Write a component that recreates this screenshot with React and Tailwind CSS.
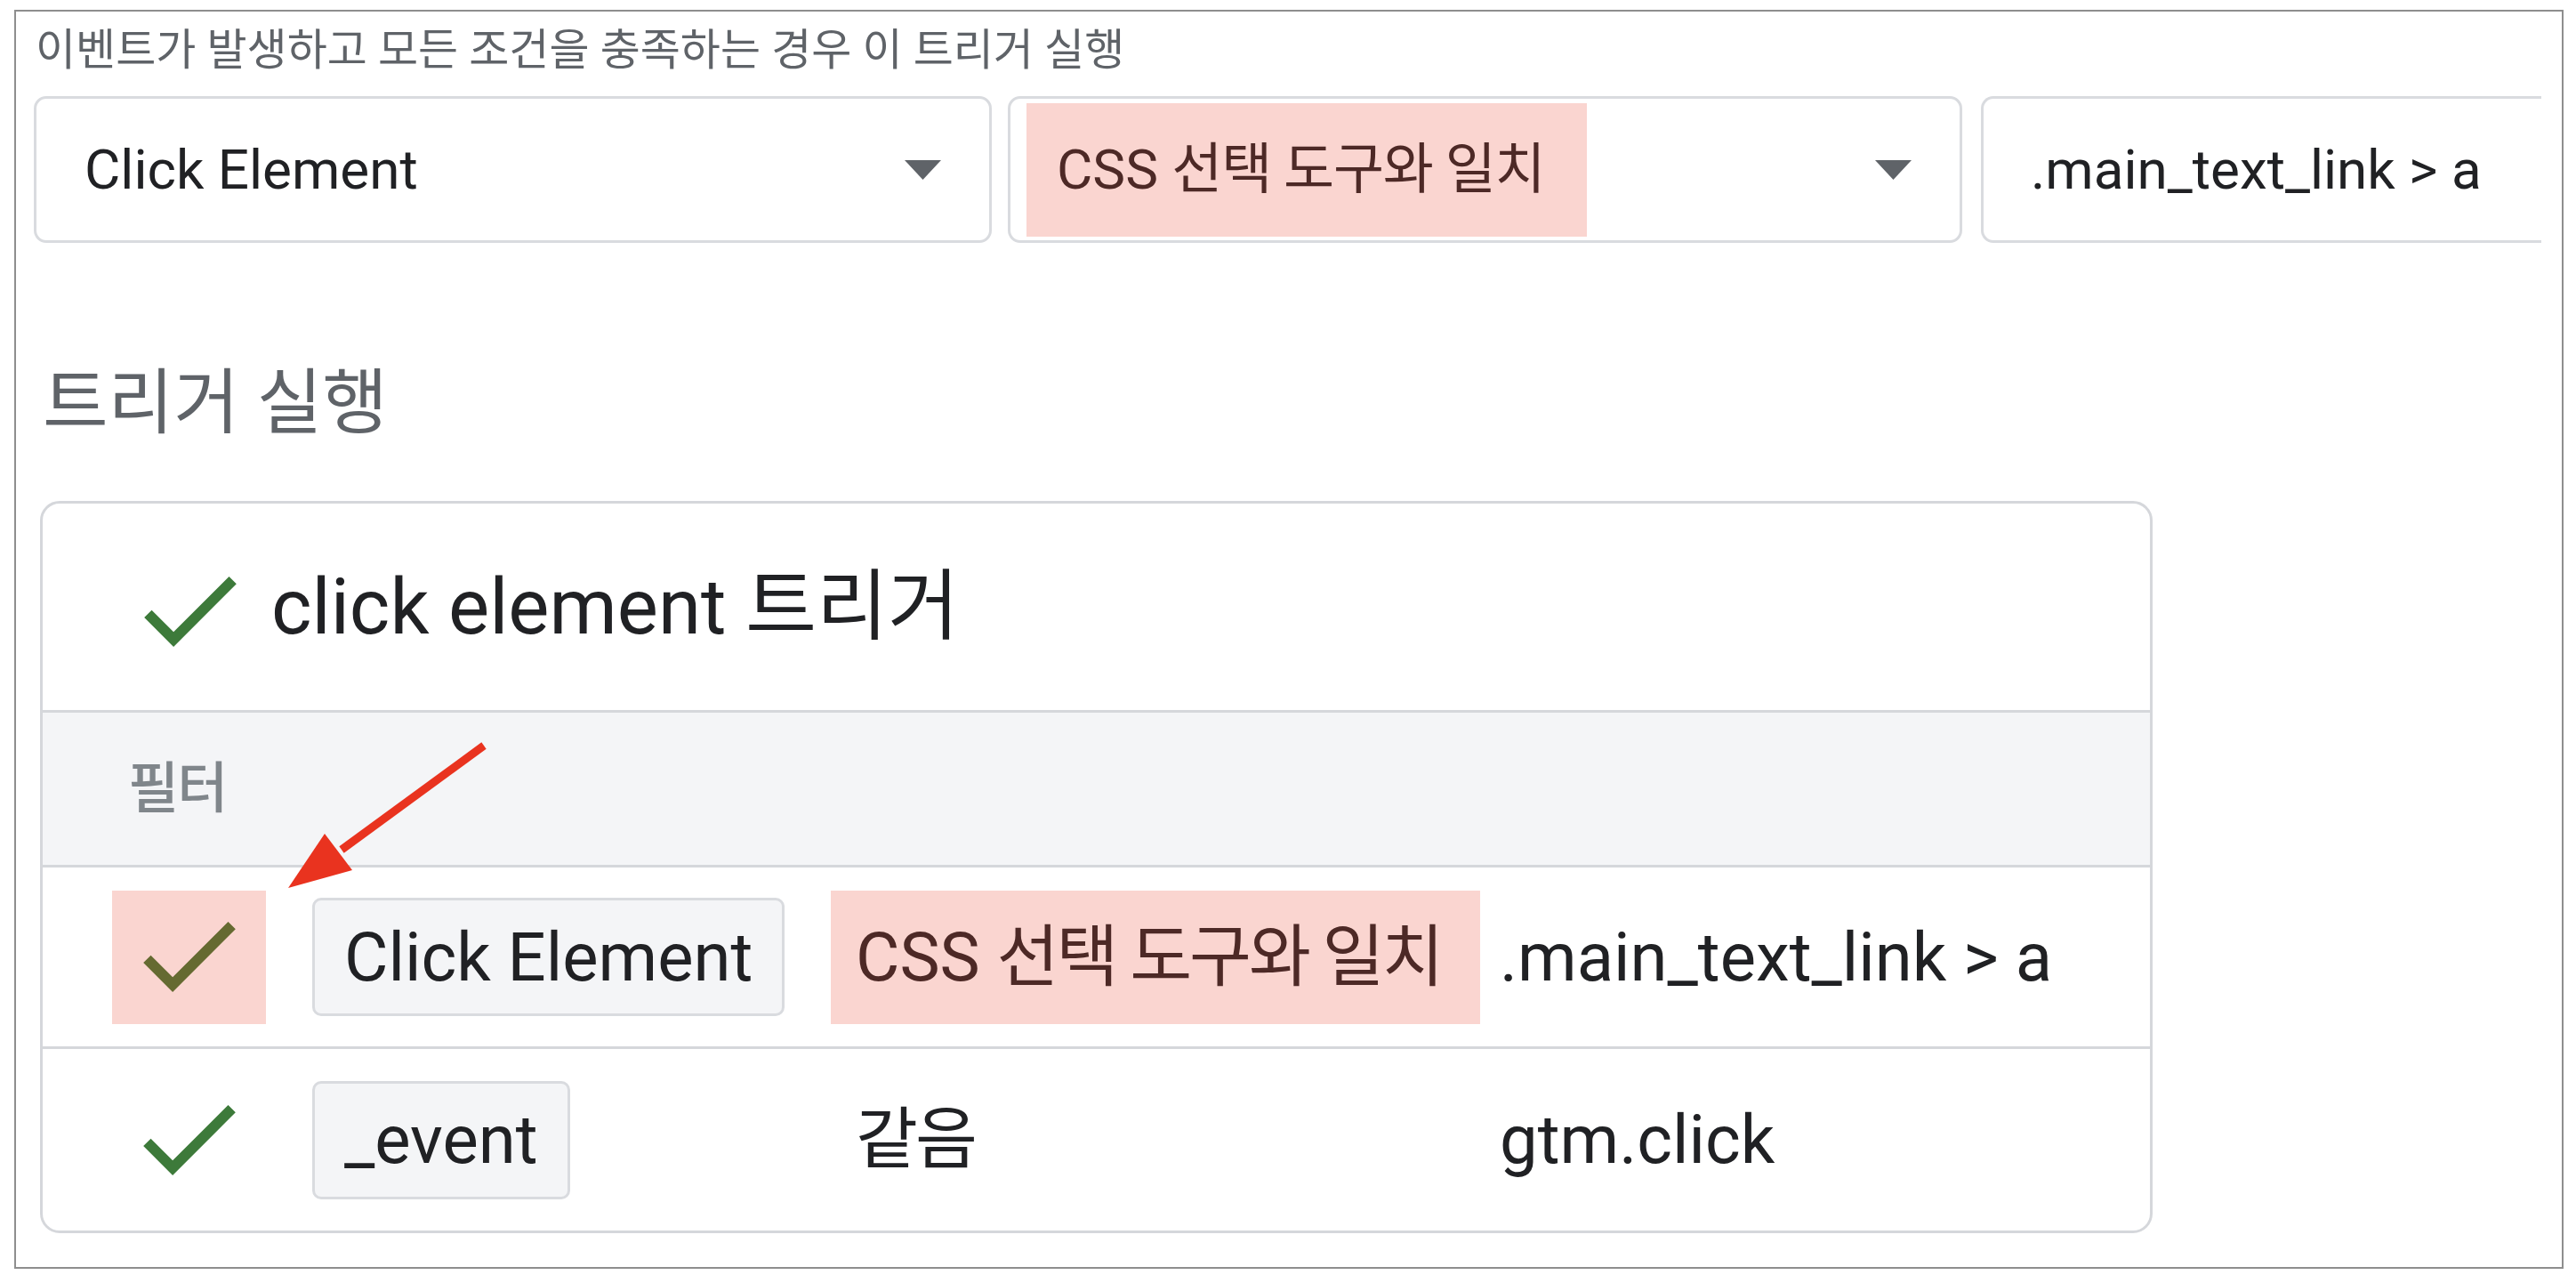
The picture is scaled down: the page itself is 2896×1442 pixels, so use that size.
import React from 'react';

// 빨간 주석 화살표 + 분홍 하이라이트가 들어간 트리거 화면
const FONT = "font-['Roboto','Noto_Sans_CJK_KR',sans-serif]";

const K = ({ children, tight }) => (
  <span className={tight ? 'tracking-[-0.04em]' : 'tracking-[-0.02em]'}>{children}</span>
);

const Check = ({ className }) => (
  <svg width="104" height="79" viewBox="3.41 5.59 17.59 13.41" className={className}>
    <path d="M9 16.17L4.83 12l-1.42 1.41L9 19 21 7l-1.41-1.41z" />
  </svg>
);

const Caret = () => (
  <svg width="41" height="22" viewBox="0 0 41 22" className="fill-[#5f6368] shrink-0">
    <polygon points="0,0 41,0 20.5,22" />
  </svg>
);

const Chip = ({ children }) => (
  <span className="inline-flex items-center h-[133px] px-[33px] border-[3px] border-[#d9dbdf] rounded-[10px] bg-[#f4f5f7] text-[76px] leading-none text-[#202124]">
    {children}
  </span>
);

const Row = ({ highlight, chip, op, value, last }) => (
  <div className={`grid grid-cols-[271px_606px_752px_1fr] items-center h-[204px] ${last ? '' : 'border-b-[3px] border-[#d5d7db]'}`}>
    <div className="pl-[78px]">
      <div className={`w-[173px] h-[150px] flex items-center justify-center ${highlight ? 'bg-[#fad5d0]' : ''}`}>
        <Check className={highlight ? 'fill-[#656a31]' : 'fill-[#3d7a3a]'} />
      </div>
    </div>
    <div className="pl-[32px]">
      <Chip>{chip}</Chip>
    </div>
    <div className="pl-[9px]">
      {highlight ? (
        <div className="w-[730px] h-[150px] bg-[#fad5d0] pl-[28px] flex items-center text-[76px] leading-none text-[#4d2926] whitespace-nowrap">
          {op}
        </div>
      ) : (
        <div className="pl-[28px] text-[76px] leading-none text-[#202124] whitespace-nowrap">{op}</div>
      )}
    </div>
    <div className="pl-[9px] text-[76px] leading-none text-[#202124] whitespace-nowrap">{value}</div>
  </div>
);

export default function App() {
  return (
    <div className={`relative w-[2896px] h-[1442px] bg-white overflow-hidden ${FONT}`}>
      <div className="ml-[16px] mt-[11px] w-[2866px] h-[1415px] border-2 border-[#8e8e8e] pl-[20px] pt-[14px]">
        {/* 안내 문구 */}
        <div className="h-[60px] leading-[60px] text-[49px] text-[#5f6368] ml-[2px] whitespace-nowrap">
          이벤트가 발생하고 모든 조건을 충족하는 경우 이 트리거 실행
        </div>

        {/* 조건 입력 줄 */}
        <div className="flex mt-[21px] h-[165px]">
          <div className="w-[1077px] h-full border-[3px] border-[#d9dbdf] rounded-[14px] flex items-center justify-between pl-[54px] pr-[54px]">
            <span className="text-[62px] leading-none text-[#202124]">Click Element</span>
            <Caret />
          </div>
          <div className="ml-[18px] w-[1073px] h-full border-[3px] border-[#d9dbdf] rounded-[14px] flex items-center justify-between pl-[18px] pr-[54px]">
            <span className="w-[630px] h-[150px] bg-[#fad5d0] pl-[34px] flex items-center text-[62px] leading-none text-[#4d2926] whitespace-nowrap">
              CSS&nbsp;<K>선택 도구와 일치</K>
            </span>
            <Caret />
          </div>
          <div className="ml-[21px] w-[630px] h-full border-y-[3px] border-l-[3px] border-[#d9dbdf] rounded-l-[14px] flex items-center pl-[53px]">
            <span className="text-[62px] leading-none text-[#202124] whitespace-nowrap">.main_text_link &gt; a</span>
          </div>
        </div>

        {/* 트리거 실행 */}
        <div className="mt-[130px] h-[100px] leading-[100px] text-[80px] text-[#5f6368] ml-[10px]">
          트리거 실행
        </div>

        <div className="mt-[60px] ml-[7px] w-[2375px] border-[3px] border-[#d5d7db] rounded-[22px] overflow-hidden">
          <div className="h-[235px] flex items-center pl-[114px] border-b-[3px] border-[#d5d7db]">
            <Check className="fill-[#3d7a3a] mt-[10px]" />
            <span className="ml-[39px] text-[87px] leading-none text-[#202124] whitespace-nowrap">
              click element 트리거
            </span>
          </div>
          <div className="h-[174px] bg-[#f4f5f7] flex items-center pl-[96px] border-b-[3px] border-[#d5d7db]">
            <span className="text-[62px] leading-none font-medium tracking-[-0.03em] text-[#80868b]">필터</span>
          </div>
          <Row
            highlight
            chip="Click Element"
            op={<>CSS&nbsp;<K tight>선택 도구와 일치</K></>}
            value=".main_text_link > a"
          />
          <Row chip="_event" op={<K tight>같음</K>} value="gtm.click" last />
        </div>
      </div>

      {/* 주석 화살표 */}
      <svg className="absolute inset-0 pointer-events-none" width="2896" height="1442">
        <line x1="544" y1="838" x2="384" y2="955" stroke="#e9331f" strokeWidth="9" />
        <polygon points="324,998 365,937 396,978" fill="#e9331f" />
      </svg>
    </div>
  );
}
